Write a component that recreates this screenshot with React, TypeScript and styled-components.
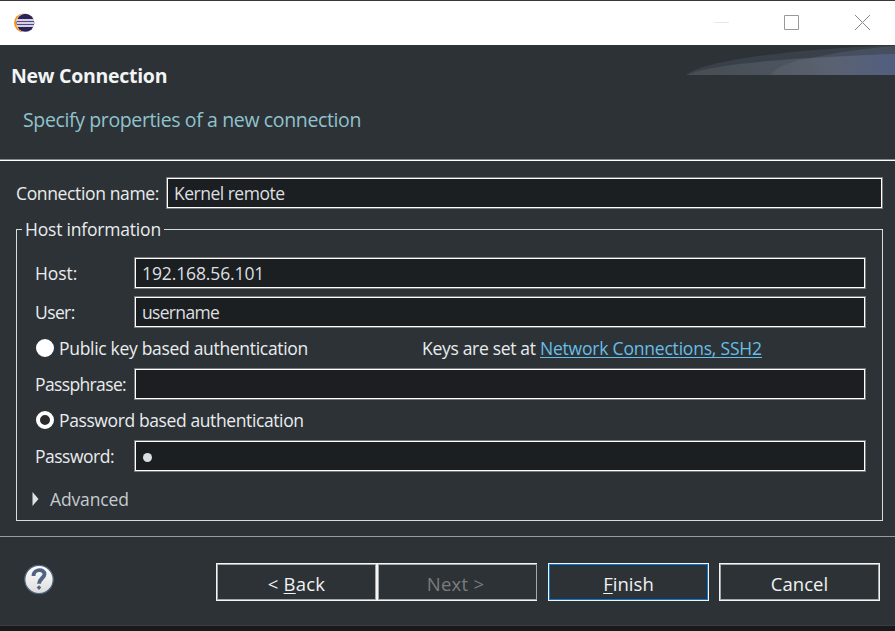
import React from 'react';
import styled, { createGlobalStyle, css } from 'styled-components';

const Global = createGlobalStyle`
  * { box-sizing: border-box; }
  html, body, #root { margin: 0; height: 100%; }
  body {
    overflow: hidden;
    background: #2d3236;
    font-family: "Open Sans", "Noto Sans", sans-serif;
    font-size: 17.5px;
    color: #e9ecee;
  }
`;

const Dialog = styled.div`
  display: flex;
  flex-direction: column;
  width: 895px;
  height: 631px;
  background: #2d3236;
  border-top: 1px solid #37383b;
`;

const TitleBar = styled.header`
  display: flex;
  align-items: center;
  justify-content: space-between;
  height: 44px;
  padding: 0 0 1px 14px;
  background: #fff;
`;

const WindowControls = styled.div`
  display: flex;
  padding-right: 24px;
  gap: 54px;
`;

const WindowGlyph = styled.svg`
  display: block;
  width: 17px;
  height: 17px;
  fill: none;
`;

const Banner = styled.section`
  display: flex;
  justify-content: space-between;
  height: 116px;
  border-bottom: 1px solid #fff;
  box-shadow: inset 0 -1px #85888a;
`;

const BannerText = styled.div`
  padding: 16px 0 0 11px;
`;

const Fit = styled.span<{ $ls: number }>`
  letter-spacing: ${(p) => p.$ls}px;
  white-space: pre;
`;

const Title = styled.h1`
  margin: 0;
  font-size: 19.5px;
  line-height: 30px;
  font-weight: 700;
  color: #f2f4f5;
`;

const Subtitle = styled.p`
  margin: 14px 0 0 12px;
  font-size: 19.5px;
  line-height: 30px;
  color: #90c3ce;
`;

const Swoosh = styled.svg`
  display: block;
  width: 208px;
  height: 30px;
`;

const Form = styled.main`
  display: flex;
  flex-direction: column;
  height: 375px;
  padding: 16px 12px 0 16px;
`;

const NameRow = styled.label`
  display: grid;
  grid-template-columns: 150px 1fr;
  height: 32px;
  line-height: 32px;
`;

const Field = styled.div`
  height: 32px;
  padding: 0 7px;
  border: 1px solid #77797b;
  box-shadow: inset 0 0 0 1px #fff;
  background: #1c1f22;
  line-height: 30px;
  color: #dcdfe0;
  white-space: pre;
`;

const Group = styled.fieldset`
  display: flex;
  flex-direction: column;
  width: 867px;
  height: 305px;
  min-width: 0;
  margin: 7px 0 0;
  padding: 15px 16px 0 14px;
  border: 1px solid #d9dbdc;

  & > legend {
    height: 26px;
    margin-left: -9px;
    padding: 0 2px 0 3px;
    width: 142px;
    line-height: 26px;
  }
`;

const FieldRow = styled.div<{ $gap: number }>`
  display: grid;
  grid-template-columns: 99px 1fr;
  height: 32px;
  margin-bottom: ${(p) => p.$gap}px;
  padding-left: 4px;
  line-height: 32px;
`;

const RadioRow = styled.div`
  display: grid;
  grid-template-columns: 387px auto;
  justify-content: start;
  height: 32px;
  margin-bottom: 4px;
  padding-left: 4px;
  line-height: 32px;
`;

const Choice = styled.span`
  display: flex;
  align-items: center;
  gap: 5px;
  padding-left: 1px;
`;

const Radio = styled.i<{ $checked?: boolean }>`
  width: 18px;
  height: 18px;
  margin-top: -1px;
  border-radius: 50%;
  border: 4px solid #fff;
  background: ${(p) => (p.$checked ? '#2b2c2e' : '#fff')};
`;

const KeyLink = styled.a`
  color: #67bfe6;
  text-decoration: underline;
  text-decoration-thickness: 1px;
  text-underline-offset: 2px;
`;

const PasswordDot = styled.i`
  display: block;
  width: 9px;
  height: 9px;
  margin: 12px 0 0 1px;
  border-radius: 50%;
  background: #dcdfe0;
`;

const Expander = styled.div`
  display: flex;
  align-items: center;
  gap: 11px;
  height: 30px;
  padding-left: 1px;
  margin-top: 8px;
  color: #c5cbce;
`;

const Footer = styled.footer`
  display: flex;
  align-items: flex-start;
  height: 90px;
  padding: 26px 15px 0 23px;
  border-top: 1px solid #9a9b9c;
  border-bottom: 1px solid #3a3c3f;
`;

const HelpIcon = styled.svg`
  width: 32px;
  height: 32px;
  margin-right: 161px;
`;

const buttonLine = css<{ $primary?: boolean }>`
  border: 1px solid #f4f5f5;
  box-shadow: inset 0 0 0 1px ${(p) => (p.$primary ? '#0a78d4' : '#a6a8a9')};
`;

const Button = styled.button<{ $primary?: boolean; $joined?: boolean }>`
  ${buttonLine}
  width: 161px;
  height: 38px;
  margin-left: ${(p) => (p.$joined ? 0 : 10)}px;
  padding: 4px 0 0;
  background: #2d3236;
  color: #f0f2f3;
  font: inherit;
  font-size: 18.5px;
  line-height: 30px;

  &:disabled {
    padding-right: 4px;
    border-right-width: 0;
    width: 160px;
    margin-right: 1px;
    color: #7b7c7d;
  }
`;

const Mnemonic = styled.u`
  text-decoration-thickness: 1px;
  text-underline-offset: 2px;
`;

const BottomEdge = styled.div`
  height: 5px;
  background: #18191d;
`;

export default function App() {
  return (
    <>
      <Global />
      <Dialog>
        <TitleBar>
          <svg width="21" height="20" viewBox="0 0 21 20">
            <circle cx="9.3" cy="9.8" r="9.3" fill="#f7941e" />
            <circle cx="11.6" cy="9.8" r="9.6" fill="#fff" />
            <circle cx="11.4" cy="9.8" r="9" fill="#2c2255" />
            <path d="M3 6h17v8H3z" fill="#51468a" />
            <path d="M3 7h17M3 10h17M3 13h17" stroke="#fff" strokeWidth="1.7" />
          </svg>
          <WindowControls>
            <WindowGlyph viewBox="0 0 17 17"><path d="M2 8.5h15" stroke="#e8e8e8" /></WindowGlyph>
            <WindowGlyph viewBox="0 0 17 17"><path d="M1.5 1.5h14v14h-14z" stroke="#999" /></WindowGlyph>
            <WindowGlyph viewBox="0 0 17 17"><path d="M1 1l15 15M16 1L1 16" stroke="#888" /></WindowGlyph>
          </WindowControls>
        </TitleBar>

        <Banner>
          <BannerText>
            <Title><Fit $ls={-0.28}>New Connection</Fit></Title>
            <Subtitle><Fit $ls={-0.37}>Specify properties of a new connection</Fit></Subtitle>
          </BannerText>
          <Swoosh viewBox="0 0 208 30">
            <defs>
              <linearGradient id="low" x1="0" x2="1">
                <stop offset="0" stopColor="#484d51" />
                <stop offset="1" stopColor="#505b70" />
              </linearGradient>
              <linearGradient id="front" x1="0" x2="1">
                <stop offset="0" stopColor="#555b64" />
                <stop offset="0.5" stopColor="#5a6171" />
                <stop offset="1" stopColor="#515f80" />
              </linearGradient>
            </defs>
            <path d="M0 29.500C15 17 90 5 208 0V30H0Z" fill="#394049" />
            <path d="M120 14C150 7 180 3 208 1V12L110 17Z" fill="#454f5e" />
            <path d="M0 29.500C25 20 90 13 208 9V30H0Z" fill="url(#low)" />
            <path d="M84 30C88 23 98 19 116 14Q155 11 208 9V30Z" fill="url(#front)" />
          </Swoosh>
        </Banner>

        <Form>
          <NameRow>
            <Fit $ls={-0.36}>Connection name:</Fit>
            <Field><Fit $ls={-0.5}>Kernel remote</Fit></Field>
          </NameRow>
          <Group>
            <legend><Fit $ls={-0.2}>Host information</Fit></legend>
            <FieldRow $gap={7}>
              <Fit $ls={-0.05}>Host:</Fit>
              <Field><Fit $ls={-0.12}>192.168.56.101</Fit></Field>
            </FieldRow>
            <FieldRow $gap={4}>
              <Fit $ls={-0.6}>User:</Fit>
              <Field><Fit $ls={-0.68}>username</Fit></Field>
            </FieldRow>
            <RadioRow>
              <Choice><Radio /><Fit $ls={-0.31}>Public key based authentication</Fit></Choice>
              <span>
                <Fit $ls={-0.31}>Keys are set at </Fit>
                <KeyLink><Fit $ls={-0.2}>Network Connections, SSH2</Fit></KeyLink>
              </span>
            </RadioRow>
            <FieldRow $gap={4}>
              <Fit $ls={-0.63}>Passphrase:</Fit>
              <Field />
            </FieldRow>
            <RadioRow>
              <Choice><Radio $checked /><Fit $ls={-0.39}>Password based authentication</Fit></Choice>
            </RadioRow>
            <FieldRow $gap={4}>
              <Fit $ls={-0.5}>Password:</Fit>
              <Field><PasswordDot /></Field>
            </FieldRow>
            <Expander>
              <svg width="7" height="14" viewBox="0 0 7 14"><path d="M0.500 0L6.500 7L0.500 14Z" fill="#dfe1e2" /></svg>
              <Fit $ls={-0.14}>Advanced</Fit>
            </Expander>
          </Group>
        </Form>

        <Footer>
          <HelpIcon viewBox="0 0 32 32">
            <defs>
              <linearGradient id="help" x2="0" y2="1">
                <stop offset="0" stopColor="#fff" />
                <stop offset="1" stopColor="#dcdcdc" />
              </linearGradient>
            </defs>
            <circle cx="16" cy="16.500" r="14.200" fill="url(#help)" stroke="#51647f" strokeWidth="1.200" />
            <path d="M10.500 13C10.500 5.500 21.800 5.500 21.500 11.300C21.300 15 16 15.800 16 20.800" fill="none" stroke="#536482" strokeWidth="3.900" />
            <path d="M16 22.300L18.300 24.600L16 27L13.700 24.600Z" fill="#536482" />
          </HelpIcon>
          <Button $joined><Fit $ls={0.2}>{'< '}<Mnemonic>B</Mnemonic>ack</Fit></Button>
          <Button $joined disabled><Fit $ls={0.25}>{'Next >'}</Fit></Button>
          <Button $primary><Fit $ls={0.05}><Mnemonic>F</Mnemonic>inish</Fit></Button>
          <Button><Fit $ls={0.05}>Cancel</Fit></Button>
        </Footer>
        <BottomEdge />
      </Dialog>
    </>
  );
}
